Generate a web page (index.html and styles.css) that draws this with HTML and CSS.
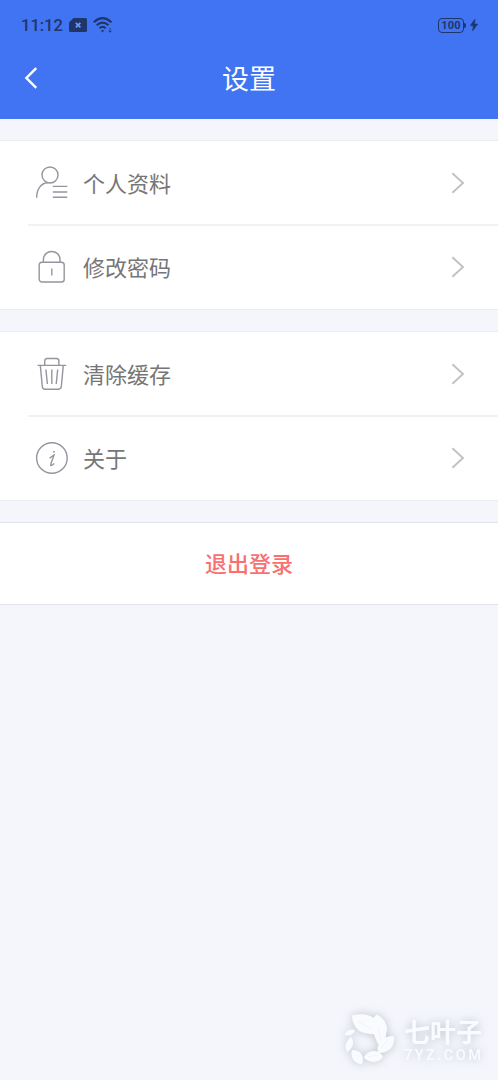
FILE: index.html
```
<!DOCTYPE html>
<html lang="zh-CN">
<head>
<meta charset="utf-8">
<title>设置</title>
<link rel="stylesheet" href="styles.css">
</head>
<body>
<header class="header">
  <div class="status">
    <div class="status-left">
      <span class="time">11:12</span>
      <svg class="sim" width="18" height="14" viewBox="0 0 18 14"><path fill="currentColor" d="M4.500 0H16.500Q18 0 18 1.500V12.500Q18 14 16.500 14H1.500Q0 14 0 12.500V4.500Z"/><path d="M6.800 4.800l4.600 4.600M11.400 4.800l-4.600 4.600" stroke="#6f99fa" stroke-width="1.700"/></svg>
      <svg class="wifi" width="20" height="16" viewBox="0 0 20 16" fill="none" stroke="currentColor" stroke-width="2.200"><path d="M.8 5.200Q9.500-2.800 18.400 5.200M3.700 8.300Q9.600 3 15.500 8.300M6.500 11.100Q9.600 8.500 12.700 11.100"/><path d="M7.800 13.200h3.600l-1.800 2.300zM15.200 13.700h3.600l-1.800 2zM15.800 12.500L17 11l1.200 1.500z" fill="currentColor" stroke="none"/></svg>
    </div>
    <div class="status-right">
      <span class="battery">100</span><span class="battery-tip"></span>
      <svg class="bolt" width="8" height="12" viewBox="0 0 8 12"><path fill="currentColor" stroke="currentColor" stroke-width=".5" d="M5 0L.2 6.700H3.300L2.500 12 7.800 5H4.600Z"/></svg>
    </div>
  </div>
  <div class="navbar">
    <svg class="back" width="14" height="22" viewBox="0 0 14 22"><path d="M12.200 1.200L2.400 11l9.800 9.800" fill="none" stroke="#fff" stroke-width="2.400"/></svg>
    <h1 class="title">设置</h1>
  </div>
</header>
<main class="content">
  <section class="group">
    <a class="row">
      <svg class="icon" viewBox="0 0 34 34"><circle cx="15" cy="9" r="8"/><path d="M1.700 31.700C1.700 23 6 17.200 12.500 16.800M17.800 20.400h14.500M17.800 26h14.500M17.800 31.200h14.500"/></svg>
      <span class="label">个人资料</span>
      <svg class="chevron" viewBox="0 0 14 22"><path d="M1.400 1.200L12 11 1.400 20.800"/></svg>
    </a>
    <a class="row">
      <svg class="icon" viewBox="0 0 34 34"><rect x="4.200" y="12.200" width="25" height="19.800" rx="2.800"/><path d="M8.400 12v-2.200C8.400-1.200 25-1.200 25 9.800V12M16.800 18.500v7"/></svg>
      <span class="label">修改密码</span>
      <svg class="chevron" viewBox="0 0 14 22"><path d="M1.400 1.200L12 11 1.400 20.800"/></svg>
    </a>
  </section>
  <section class="group">
    <a class="row">
      <svg class="icon" viewBox="0 0 34 34"><path d="M2.500 8.400h28.700M9.700 8V4.100Q9.700 1.500 12.300 1.500h9Q23.900 1.500 23.900 4.100V8M5.300 8.400L7.300 29.500Q7.600 32.200 10 32.200H23.600Q26 32.200 26.300 29.500L28.300 8.400M10.900 12.500L12.400 27M16.800 12.500V27M22.700 12.500L21.200 27"/></svg>
      <span class="label">清除缓存</span>
      <svg class="chevron" viewBox="0 0 14 22"><path d="M1.400 1.200L12 11 1.400 20.800"/></svg>
    </a>
    <a class="row">
      <svg class="icon" viewBox="0 0 34 34"><circle cx="16.900" cy="17" r="15.300"/><path d="M14.600 17.200Q17.300 15.200 19 14.200L16 22.500Q15.100 25.200 17 24.200L19.300 22.500M19.300 10l-.8 1.600"/></svg>
      <span class="label">关于</span>
      <svg class="chevron" viewBox="0 0 14 22"><path d="M1.400 1.200L12 11 1.400 20.800"/></svg>
    </a>
  </section>
  <button class="logout">退出登录</button>
</main>
<div class="watermark">
  <svg class="leaves" width="52" height="54" viewBox="0 0 52 54"><g fill="currentColor"><path d="M8 2.500C17 0 26 1 31 6L37 21C26 22 18 20 14 17 10 13 8 8 8 2.500Z"/><path d="M33 1.500C39 5 43 10 43 16L40 34 34 31C30 23 28 15 28 11 28 7 30 3 33 1.500Z"/><path d="M50 23C51 34 45 40 34 40 32 30 38 23 50 23Z"/><path d="M19.500 44.500C25 36 34 36 39 43.500 35 51 25 50 19.500 44.500Z"/><path d="M8 37C16 37 21 42 18 51.500 10 50 6 45 8 37Z"/><path d="M7 24C11 30 9 35 3 39 0 33 2 28 7 24Z"/><path d="M1 22C2 17 6 16 11 17 10 21 6 23 1 22Z"/></g><path d="M14 8l13 8M34 14l3 14M44 27l-8 9M24 44l9-2" stroke="#eceef3" stroke-width=".6" fill="none"/></svg>
  <div class="brand"><span class="brand-name">七叶子</span><span class="brand-url">7YZ.COM</span></div>
</div>
</body>
</html>
```
FILE: styles.css
```
* { box-sizing: border-box; }
body {
  margin: 0;
  min-height: 1080px;
  background: #f4f6fc;
  font-family: "Noto Sans CJK SC", sans-serif;
}
.header { height: 119px; background: #4074f3; color: #203568; }
.status {
  height: 50px;
  padding: 0 20px 0 21px;
  display: flex;
  justify-content: space-between;
  align-items: center;
}
.status-left, .status-right { display: flex; align-items: center; }
.time { font: 500 16.500px/20px Roboto, sans-serif; width: 48px; padding-top: 1px; }
.wifi { margin-left: 6px; }
.battery {
  width: 26px;
  height: 15px;
  border: 1.500px solid currentColor;
  border-radius: 4px;
  font: 700 11px/13px Roboto, sans-serif;
  letter-spacing: .2px;
  text-align: center;
}
.battery-tip { width: 2px; height: 5px; background: currentColor; border-radius: 0 2px 2px 0; }
.bolt { margin-left: 4px; }
.navbar {
  height: 56px;
  padding: 0 24px;
  display: grid;
  grid-template-columns: 14px 1fr 14px;
  align-items: center;
}
.title { margin: 0; color: #fff; font-size: 27px; line-height: 40px; font-weight: 400; text-align: center; }
.content { padding-top: 21px; display: flex; flex-direction: column; gap: 21px; }
.group { height: 170px; background: #fff; border-top: 1px solid #ececf0; border-bottom: 1px solid #ececf0; }
.row { height: 83px; padding: 0 33px 0 35px; display: flex; align-items: center; }
.row + .row { height: 85px; background: linear-gradient(#f2f2f4, #f2f2f4) 28px 0 / 100% 2px no-repeat; }
.icon { width: 34px; height: 34px; fill: none; stroke: #94959e; stroke-width: 1.400; }
.label { flex: 1; margin-left: 14px; padding-bottom: 2px; color: #767676; font-size: 22px; line-height: 32px; }
.chevron { width: 14px; height: 22px; fill: none; stroke: #c1c1c1; stroke-width: 1.900; }
.logout {
  height: 83px;
  padding: 0 0 4px;
  border: solid #e2e2e8;
  border-width: 1.500px 0;
  background: #fff;
  color: #f87070;
  font: 500 22px/32px "Noto Sans CJK SC", sans-serif;
}
.watermark {
  position: absolute;
  left: 344px;
  top: 1013px;
  display: flex;
  color: #fafbfe;
  filter: drop-shadow(0 0 5px rgba(70, 75, 90, .3));
}
.brand { margin-left: 8px; padding-top: 5px; display: flex; flex-direction: column; gap: 4px; }
.brand-name { font-size: 26px; line-height: 26px; font-weight: 700; }
.brand-url { font: 500 14.500px/15px Roboto, sans-serif; letter-spacing: 2.500px; }
```
